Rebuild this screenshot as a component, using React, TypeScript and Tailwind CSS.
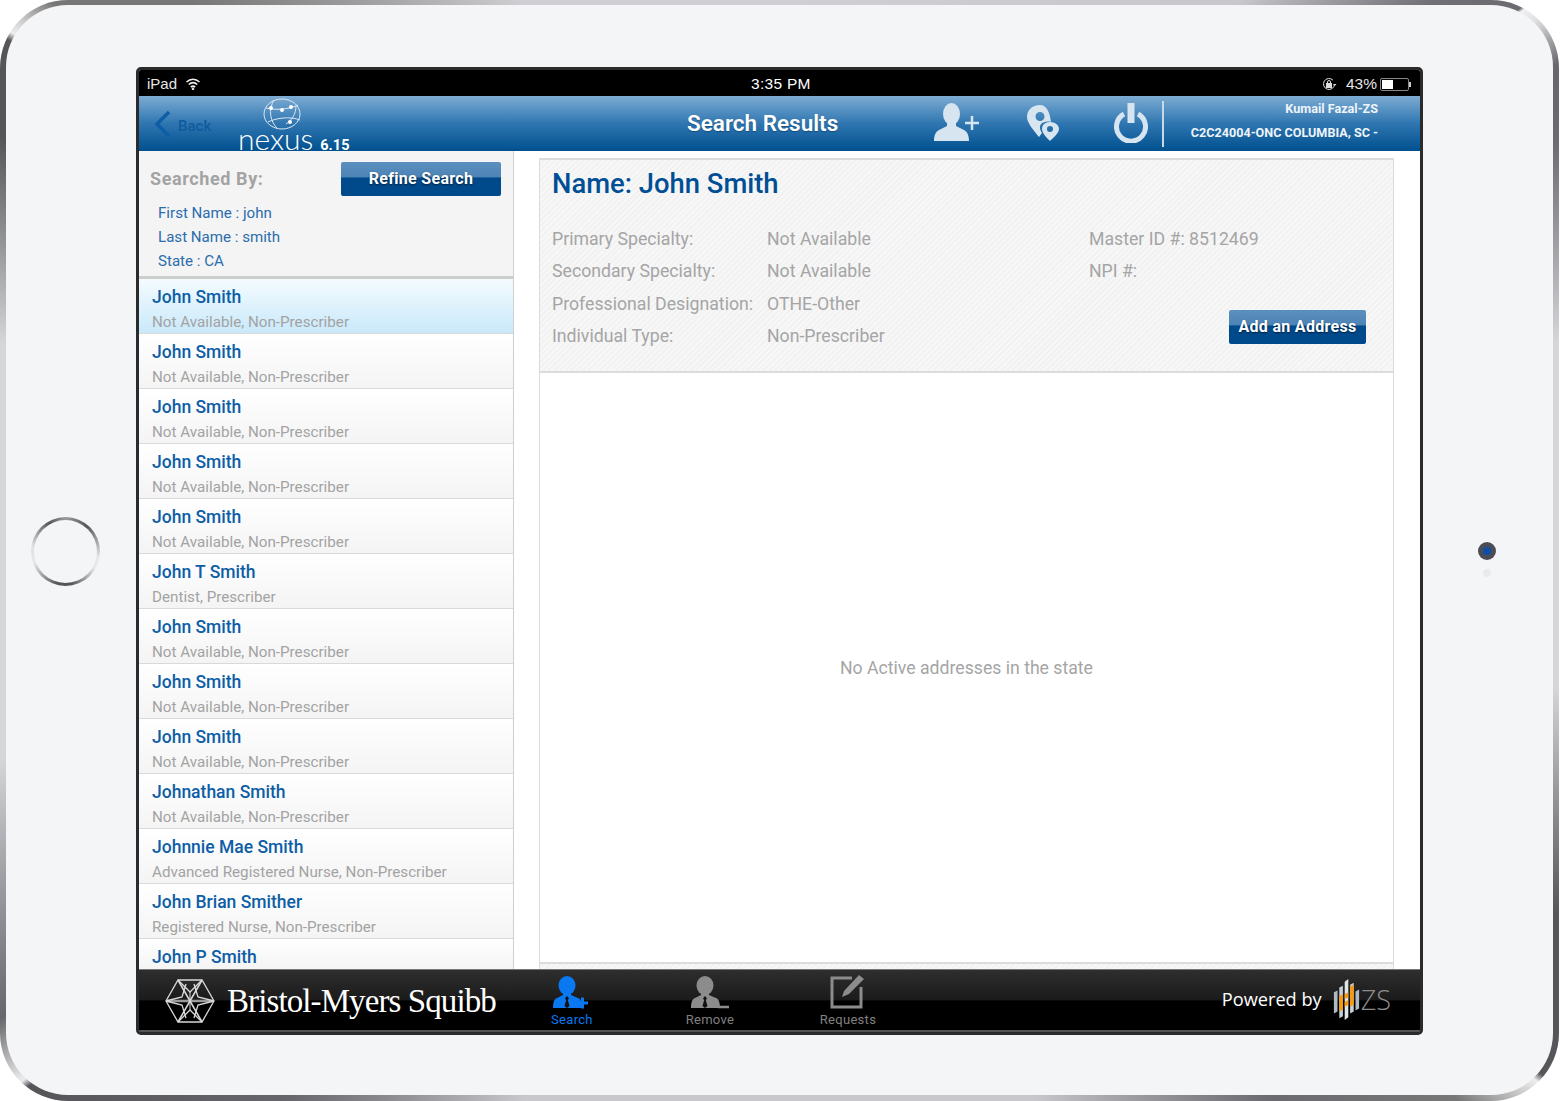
import React from "react";

type Doctor = { name: string; detail?: string };

const doctors: Doctor[] = [
  { name: "John Smith", detail: "Not Available, Non-Prescriber" },
  { name: "John Smith", detail: "Not Available, Non-Prescriber" },
  { name: "John Smith", detail: "Not Available, Non-Prescriber" },
  { name: "John Smith", detail: "Not Available, Non-Prescriber" },
  { name: "John Smith", detail: "Not Available, Non-Prescriber" },
  { name: "John T Smith", detail: "Dentist, Prescriber" },
  { name: "John Smith", detail: "Not Available, Non-Prescriber" },
  { name: "John Smith", detail: "Not Available, Non-Prescriber" },
  { name: "John Smith", detail: "Not Available, Non-Prescriber" },
  { name: "Johnathan Smith", detail: "Not Available, Non-Prescriber" },
  { name: "Johnnie Mae Smith", detail: "Advanced Registered Nurse, Non-Prescriber" },
  { name: "John Brian Smither", detail: "Registered Nurse, Non-Prescriber" },
  { name: "John P Smith" },
];

const details = [
  ["Primary Specialty:", "Not Available"],
  ["Secondary Specialty:", "Not Available"],
  ["Professional Designation:", "OTHE-Other"],
  ["Individual Type:", "Non-Prescriber"],
];

const hatch =
  "bg-[repeating-linear-gradient(135deg,#f7f7f7_0px,#f7f7f7_2px,#f2f2f2_2px,#f2f2f2_4px)]";

const HeaderPerson = () => (
  <svg width="46" height="39" viewBox="0 0 46 39" fill="#d6e5f0">
    <ellipse cx="17.500" cy="11" rx="8.500" ry="11" />
    <path d="M13 18h9v5l8 4c3 1.500 5 5 5 11H0c0-6 2-9.500 5-11l8-4z" />
    <path d="M31 20h14M38 13v14" stroke="#d6e5f0" strokeWidth="2.500" />
  </svg>
);

const TabPerson = ({ color, sign }: { color: string; sign: "+" | "-" }) => (
  <svg width="38" height="33" viewBox="0 0 38 33">
    <ellipse cx="14" cy="9.500" rx="8.500" ry="9.500" fill={color} />
    <path d="M10 16h8v3l7 3c3 1 4 5 4 10H0c0-5 1-9 4-10l6-3z" fill={color} />
    <path d="M14 20l-2 2.500 1.200 1.500-1.700 6 2.500 2 2.500-2-1.700-6 1.200-1.500z" fill="#111" />
    {sign === "+" ? (
      <path d="M24 27h11M29.500 21.500v11" stroke={color} strokeWidth="3" />
    ) : (
      <path d="M27 31h11" stroke={color} strokeWidth="2.500" />
    )}
  </svg>
);

const NexusGlobe = () => (
  <svg width="40" height="34" viewBox="0 0 40 34" fill="none" stroke="#dbe7f2">
    <ellipse cx="20" cy="16" rx="18" ry="15" strokeWidth="1" />
    <path d="M4 10c8 2 22 2 32-3M6 24c8-4 22-6 32-2M12 2C6 12 8 24 16 31M24 26c6-4 10-10 10-18" strokeWidth="1" />
    <circle cx="9" cy="10" r="2" fill="#fff" stroke="none" />
    <circle cx="20" cy="12" r="2" fill="#fff" stroke="none" />
    <circle cx="29" cy="9" r="2" fill="#fff" stroke="none" />
    <circle cx="28" cy="24" r="2" fill="#fff" stroke="none" />
  </svg>
);

const BmsLogo = () => (
  <svg width="50" height="44" viewBox="0 0 50 44" fill="none" stroke="#d8d8d8" strokeWidth="1.300">
    <path d="M13 1h24l12 21-12 21H13L1 22z" />
    <path d="M1 22h48" stroke="#9a9a9a" strokeWidth="2.500" />
    <path d="M13 1l24 42M37 1L13 43" strokeWidth="1.600" />
    <path d="M13 1l12 12 12-12M49 22l-16-4-4-13M49 22l-16 4-4 13M37 43L25 31 13 43M1 22l16 4 4 13M1 22l16-4 4-13" />
    <path d="M25 13v18" strokeWidth="1" />
  </svg>
);

const ZsMark = () => (
  <svg width="27" height="44" viewBox="0 0 30 46" preserveAspectRatio="none">
    <path d="M1 15l4-2v22l-4 2z" fill="#aeb9c1" />
    <path d="M7 10l4-2v32l-4 2z" fill="#c7d0d6" />
    <path d="M7 19l4-2v16l-4 2z" fill="#f59a10" />
    <path d="M13 4l4-3v40l-4 3z" fill="#dfe5e9" />
    <path d="M19 7l4-2v30l-4 2z" fill="#c7d0d6" />
    <path d="M19 9l4-2v21l-4 2z" fill="#f59a10" />
    <path d="M13 17l4-2v5l-4 2zM13 25l4-2v5l-4 2z" fill="#f59a10" />
    <path d="M25 14l4-2v20l-4 2z" fill="#aeb9c1" />
  </svg>
);

const TabItem = ({ label, active, children }: { label: string; active?: boolean; children: React.ReactNode }) => (
  <div className="flex w-[138px] flex-col items-center">
    <div className="flex h-[37px] items-end pb-[3px]">{children}</div>
    <span className={`text-[13px] leading-[16px] tracking-[0.3px] ${active ? "text-[#0a78f0]" : "text-[#808080]"}`}>
      {label}
    </span>
  </div>
);

const BlueButton = ({ label, width }: { label: string; width: string }) => (
  <button
    className={`${width} h-[34px] rounded-[2px] bg-[linear-gradient(#5b8fbf_0%,#4d84b6_45%,#004a8c_46%,#004a8c_100%)] text-[16px] font-bold tracking-[0.3px] text-white [text-shadow:0_1px_2px_rgba(0,0,0,0.6)]`}
  >
    {label}
  </button>
);

export default function App() {
  return (
    <div className="h-[1101px] w-[1560px] overflow-hidden bg-white font-['Roboto',sans-serif]">
      <div className="h-[1101px] w-[1559px] rounded-[68px] bg-[conic-gradient(#d0d0d4_0deg,#c8c8cc_40deg,#6f6f75_50deg,#6a6a70_53.8deg,#f0f0f2_54deg,#e0e0e2_55deg,#66666c_58deg,#6a6a70_62deg,#d5d6da_75deg,#d5d6da_100deg,#55555a_115deg,#55555a_124.5deg,#eeeeee_125deg,#777777_129deg,#6a6a70_138deg,#c8c8cc_155deg,#c8c8cc_205deg,#66666c_222deg,#55555a_234.5deg,#eeeeee_235deg,#66666c_239deg,#d5d6da_255deg,#d5d6da_285deg,#55555a_298deg,#55555a_303.5deg,#eeeeee_304deg,#cccccc_305deg,#777777_307deg,#777777_313deg,#d0d0d4_335deg)] p-[5px_6px_6px_6px]">
        <div className="flex h-full items-center rounded-[62px] bg-[#f4f5f7] pt-[2px]">
          {/* home button */}
          <div className="flex w-[130px] shrink-0 justify-start pl-[25px]">
            <div className="size-[69px] rounded-full bg-[conic-gradient(#9a9a9e_0deg,#55555a_40deg,#e8e8ea_100deg,#e8e8ea_120deg,#55555a_170deg,#55555a_195deg,#e8e8ea_250deg,#e0e0e2_280deg,#55555a_330deg,#9a9a9e_360deg)] p-[3px]">
              <div className="size-full rounded-full bg-[#f4f5f7]" />
            </div>
          </div>

          {/* screen */}
          <div className="flex h-[968px] w-[1287px] shrink-0 flex-col overflow-hidden rounded-[5px] border-[3px] border-[#2b2b2b] bg-white">
            {/* status bar */}
            <div className="flex h-[26px] shrink-0 items-center bg-black pl-[8px] pr-[9px] pt-[2px] font-['Liberation_Sans',sans-serif] text-[15px] text-[#e6e6e6]">
              <div className="flex w-[320px] items-center gap-[8px]">
                <span>iPad</span>
                <svg width="16" height="12" viewBox="0 0 15 12" fill="none" stroke="#eee" strokeWidth="1.600">
                  <path d="M1 4c4-3.500 9-3.500 13 0M3.200 6.500c2.700-2.300 6-2.300 8.600 0M5.300 9c1.400-1.100 3-1.100 4.400 0" />
                  <circle cx="7.500" cy="10.800" r="0.500" />
                </svg>
              </div>
              <span className="ml-[284px] text-[15.500px] tracking-[0.3px] text-white">3:35 PM</span>
              <div className="ml-auto flex items-center gap-[9px]">
                <svg width="15" height="14" viewBox="0 0 15 14" fill="none" stroke="#ddd" strokeWidth="1">
                  <path d="M12.500 7a5.500 5.500 0 1 1-1.500-3.800" />
                  <path d="M14.500 7h-3.500l1.750 2z" fill="#ddd" stroke="none" />
                  <rect x="4.500" y="6.500" width="5" height="4" fill="#ddd" />
                  <path d="M5.500 6.500V5a1.500 1.500 0 0 1 3 0v1.500" />
                </svg>
                <span className="text-[15.500px]">43%</span>
                <div className="-ml-[6px] flex items-center">
                  <div className="h-[13px] w-[29px] rounded-[2px] border border-[#888] p-[1px]">
                    <div className="h-full w-[11px] bg-white" />
                  </div>
                  <div className="h-[5px] w-[2px] bg-[#ccc]" />
                </div>
              </div>
            </div>

            {/* header */}
            <div className="flex h-[55px] shrink-0 items-center bg-[linear-gradient(#7dacd3,#2f76b1_50%,#00508f)]">
              <div className="flex w-[99px] items-center pl-[15px]">
                <svg width="18" height="28" viewBox="0 0 18 28" fill="none" stroke="#0d5ea6" strokeWidth="3.500">
                  <path d="M15 2L3 14l12 12" />
                </svg>
                <span className="ml-[6px] mt-[5px] text-[15px] font-medium text-[#0f5b9f]">Back</span>
              </div>
              <div className="flex h-[55px] w-[120px] flex-col pt-[2px]">
                <div className="ml-[24px] h-[29px]">
                  <NexusGlobe />
                </div>
                <div className="flex items-baseline">
                  <span className="font-['Lato',sans-serif] text-[30px] font-light leading-[22px] text-white">nexus</span>
                  <span className="ml-[7px] text-[14.500px] font-bold leading-[22px] text-white">6.15</span>
                </div>
              </div>
              <div className="ml-[329px] mt-[1px] w-[151px] whitespace-nowrap text-[22.500px] font-semibold text-white [text-shadow:0_1px_1px_rgba(0,0,0,0.3)]">
                Search Results
              </div>
              <div className="ml-[96px] mt-[-2px]">
                <HeaderPerson />
              </div>
              <svg className="ml-[46px] mt-[-1px]" width="34" height="38" viewBox="0 0 34 36" fill="#d6e5f0">
                <path fillRule="evenodd" d="M14 0C6 0 1 5 1 12c0 6 8 15 12 20 1-1 2-3 3-4-2-3-3-6-1-9 2-2 6-3 10-2-1-9-4-17-11-17zm0 7a4.500 4.500 0 1 1 0 9 4.500 4.500 0 0 1 0-9z" />
                <path fillRule="evenodd" d="M24 17c-5 0-8 3-8 7 0 4 5 9 8 12 3-3 9-8 9-12 0-4-4-7-9-7zm0 4a3 3 0 1 1 0 6 3 3 0 0 1 0-6z" />
              </svg>
              <svg className="ml-[54px] mt-[-2px]" width="34" height="40" viewBox="0 0 34 40" fill="none" stroke="#d6e5f0">
                <path d="M10 11a14.500 14.500 0 1 0 14 0" strokeWidth="5" />
                <path d="M17 0v20" strokeWidth="7" />
              </svg>
              <div className="ml-[14px] h-[46px] w-[2px] bg-[#c6d9e8]" />
              <div className="ml-[26px] flex h-[50px] w-[188px] flex-col items-end justify-between whitespace-nowrap pb-[6px] pt-[0px] text-[12.600px] font-bold leading-[20px] text-[#eef4f9]">
                <span>Kumail Fazal-ZS</span>
                <span>C2C24004-ONC COLUMBIA, SC -</span>
              </div>
            </div>

            {/* body */}
            <div className="flex min-h-0 flex-1">
              <aside className="flex w-[375px] shrink-0 flex-col overflow-hidden border-r border-[#cfcfcf]">
                <div className="h-[128px] shrink-0 border-b-[3px] border-[#cdcdcd] bg-[#f4f4f4] pl-[11px] pr-[12px] pt-[11px]">
                  <div className="flex h-[34px] items-center justify-between">
                    <span className="mt-[-2px] text-[18px] font-bold tracking-[0.6px] text-[#a3a3a3]">Searched By:</span>
                    <BlueButton label="Refine Search" width="w-[160px]" />
                  </div>
                  <div className="ml-[8px] mt-[5px] text-[15.100px] leading-[24px] text-[#2a6dac]">
                    <p>First Name : john</p>
                    <p>Last Name : smith</p>
                    <p>State : CA</p>
                  </div>
                </div>
                {doctors.map((doc, i) => (
                  <div
                    key={i}
                    className={`shrink-0 pl-[13px] pt-[6px] ${doc.detail ? "h-[55px] border-b border-[#d9d9d9]" : "h-[30px]"} ${
                      i === 0 ? "bg-[linear-gradient(#f4fbff,#c9e9fa)]" : "bg-[linear-gradient(#ffffff,#f4f4f4)]"
                    }`}
                  >
                    <p className="text-[17.500px] font-medium leading-[24px] text-[#0d5ea6]">{doc.name}</p>
                    {doc.detail && <p className="mt-[1px] text-[15.200px] leading-[24px] text-[#a3a3a3]">{doc.detail}</p>}
                  </div>
                ))}
              </aside>

              <main className="min-w-0 flex-1 overflow-hidden pl-[25px] pr-[26px] pt-[7px]">
                <div className="flex h-[1000px] flex-col border-x border-[#dcdcdc]">
                  <section className={`relative h-[215px] shrink-0 border-b-2 border-t-2 border-[#dcdcdc] pl-[12px] pt-[5px] ${hatch}`}>
                    <h1 className="text-[27.400px] font-medium leading-[38px] text-[#004f95]">Name: John Smith</h1>
                    <div className="mt-[20px] flex text-[17.700px] leading-[32.400px] text-[#a5a5a5]">
                      <div className="grid w-[537px] grid-cols-[215px_1fr]">
                        {details.map(([label, value]) => (
                          <React.Fragment key={label}>
                            <span className="whitespace-nowrap">{label}</span>
                            <span>{value}</span>
                          </React.Fragment>
                        ))}
                      </div>
                      <div>
                        <p>Master ID #: 8512469</p>
                        <p>NPI #:</p>
                      </div>
                    </div>
                    <div className="absolute bottom-[27px] right-[27px]">
                      <BlueButton label="Add an Address" width="w-[137px]" />
                    </div>
                  </section>
                  <div className="flex h-[589px] shrink-0 items-center justify-center pt-[2px] text-[17.650px] text-[#a5a5a5]">
                    No Active addresses in the state
                  </div>
                  <div className={`h-[40px] shrink-0 border-t-2 border-[#dcdcdc] ${hatch}`} />
                </div>
              </main>
            </div>

            {/* tab bar */}
            <div className="flex h-[63px] shrink-0 items-center border-t border-[#777] bg-[linear-gradient(#2e2e2e,#1b1b1b_48%,#000_50%,#000)] pr-[29px] shadow-[inset_0_-2px_0_#555]">
              <div className="ml-[26px] shrink-0">
                <BmsLogo />
              </div>
              <span className="ml-[12px] shrink-0 whitespace-nowrap font-['Liberation_Serif',serif] text-[33px] leading-[40px] tracking-[-0.9px] text-white">
                Bristol-Myers Squibb
              </span>
              <div className="ml-[7px] flex">
                <TabItem label="Search" active>
                  <TabPerson color="#0a78f0" sign="+" />
                </TabItem>
                <TabItem label="Remove">
                  <TabPerson color="#8c8c8c" sign="-" />
                </TabItem>
                <TabItem label="Requests">
                  <svg width="36" height="36" viewBox="0 0 36 36" fill="none" stroke="#8c8c8c">
                    <path d="M22 5H2v29h29V14" strokeWidth="3" />
                    <path d="M12 24l2-6L29 2l5 4-15 15z" fill="#8c8c8c" stroke="none" />
                  </svg>
                </TabItem>
              </div>
              <div className="ml-auto flex items-center gap-[11px] pb-[3px]">
                <span className="font-['Open_Sans',sans-serif] text-[18.200px] text-white">Powered by</span>
                <div className="flex items-center gap-[1px]">
                  <ZsMark />
                  <span className="font-['Open_Sans',sans-serif] text-[27px] font-light leading-none text-[#8b8b8b]">ZS</span>
                </div>
              </div>
            </div>
          </div>

          {/* camera */}
          <div className="flex flex-1 flex-col items-center pr-[2px] pt-[16px]">
            <div className="flex size-[18px] items-center justify-center rounded-full bg-[#4a4d55]">
              <div className="size-[8px] rounded-full bg-[#0d4fa8]" />
            </div>
            <div className="mt-[9px] size-[8px] rounded-full bg-[#e9eaec]" />
          </div>
        </div>
      </div>
    </div>
  );
}
